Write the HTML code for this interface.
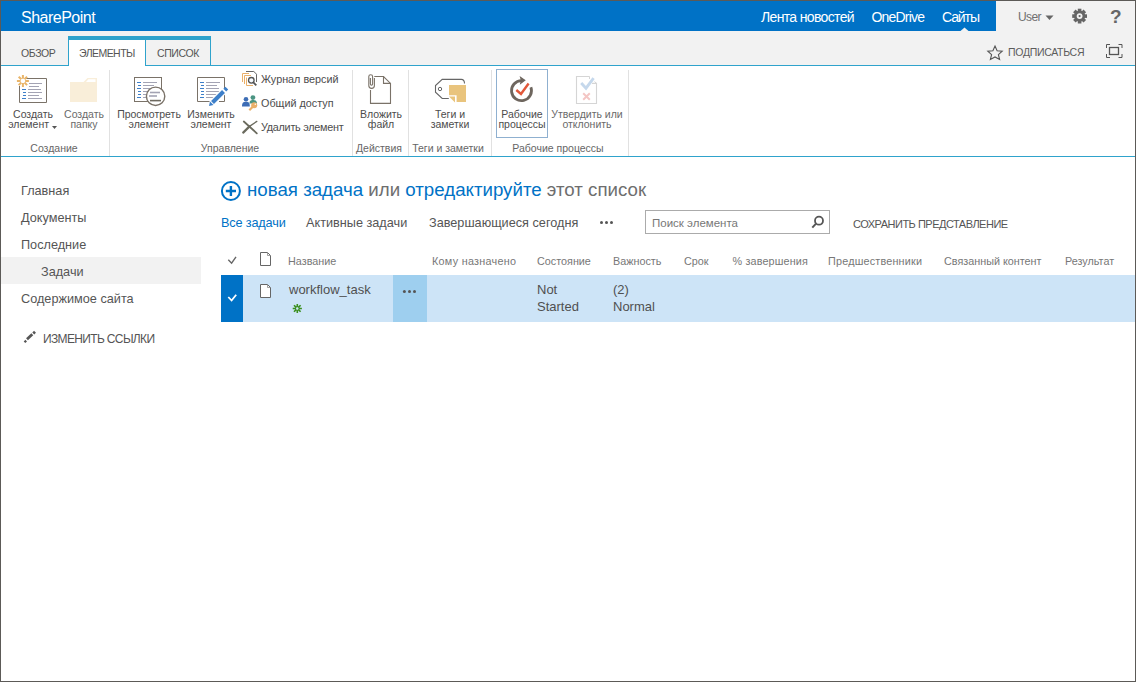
<!DOCTYPE html>
<html><head><meta charset="utf-8">
<style>
*{margin:0;padding:0;box-sizing:border-box}
html,body{width:1136px;height:682px;overflow:hidden;background:#fff}
body{font-family:"Liberation Sans",sans-serif;position:relative;color:#444}
.a{position:absolute;white-space:nowrap;line-height:1}
#frame{position:absolute;left:0;top:0;width:1136px;height:682px;border:1px solid #5c5a57;pointer-events:none;z-index:50}
.st{color:#fff;font-size:14px;top:9.5px;letter-spacing:-0.65px}
.tab{font-size:10.5px;color:#555;top:48px;letter-spacing:-0.4px}
.rb{font-size:10.5px;color:#4c4c4c;text-align:center;line-height:10px;top:109px;width:90px;white-space:nowrap}
.dis{color:#6a6a6a}
.gl{font-size:10.5px;color:#666;top:143px;width:120px;text-align:center}
.sep{position:absolute;top:70px;width:1px;height:86px;background:#e1e1e1}
.nav{font-size:12.7px;color:#555}
.sm{font-size:10.8px;color:#4c4c4c;left:261px}
.hd{font-size:10.8px;color:#777;top:256px}
.cell{font-size:13px;color:#505050;line-height:17px;top:281px}
svg{position:absolute;overflow:visible}
</style></head><body>
<!-- suite bar -->
<div class="a" style="left:0;top:0;width:1136px;height:31px;background:#f2f2f2"></div>
<div class="a" style="left:0;top:0;width:996px;height:31px;background:#0072c6"></div>
<div class="a st" style="left:21px;top:9.5px;font-size:16px;letter-spacing:-0.5px">SharePoint</div>
<div class="a st" style="left:761px">Лента новостей</div>
<div class="a st" style="left:871.5px;letter-spacing:-0.8px">OneDrive</div>
<div class="a st" style="left:942px;letter-spacing:-1.1px">Сайты</div>
<div class="a" style="left:1018px;top:11px;font-size:12px;color:#707070;letter-spacing:-0.6px">User</div>
<div class="a" style="left:1110px;top:7px;font-size:19px;font-weight:bold;color:#666">?</div>

<!-- ribbon tabs row -->
<div class="a" style="left:0;top:31px;width:1136px;height:35px;background:#f2f2f2"></div>
<div class="a" style="left:0;top:65px;width:1136px;height:1px;background:#2fa3cc"></div>
<div class="a" style="left:68px;top:36px;width:143px;height:4px;background:#2fa3cc"></div>
<div class="a" style="left:68px;top:40px;width:78px;height:26px;background:#fff;border-left:1px solid #2fa3cc;border-right:1px solid #2fa3cc"></div>
<div class="a" style="left:210px;top:40px;width:1px;height:25px;background:#2fa3cc"></div>
<div class="a tab" style="left:21px">ОБЗОР</div>
<div class="a tab" style="left:79px;letter-spacing:-0.55px">ЭЛЕМЕНТЫ</div>
<div class="a tab" style="left:157px">СПИСОК</div>
<div class="a" style="left:1008px;top:47px;font-size:10.5px;color:#5c5c5c;letter-spacing:-0.3px">ПОДПИСАТЬСЯ</div>

<!-- ribbon -->
<div class="a" style="left:0;top:156px;width:1136px;height:1px;background:#2fa3cc"></div>
<div class="sep" style="left:109px"></div>
<div class="sep" style="left:352px"></div>
<div class="sep" style="left:408px"></div>
<div class="sep" style="left:491px"></div>
<div class="sep" style="left:628px"></div>

<div class="a rb" style="left:-12px">Создать<br>элемент&nbsp;&nbsp;&nbsp;</div>
<div class="a rb dis" style="left:39px">Создать<br>папку</div>
<div class="a rb" style="left:104px">Просмотреть<br>элемент</div>
<div class="a rb" style="left:166px">Изменить<br>элемент</div>
<div class="a rb" style="left:336px">Вложить<br>файл</div>
<div class="a rb" style="left:405px">Теги и<br>заметки</div>
<div class="a" style="left:496px;top:69px;width:52px;height:69px;border:1px solid #8fb0d0;background:#fff"></div>
<div class="a rb" style="left:477px">Рабочие<br>процессы</div>
<div class="a rb dis" style="left:542px">Утвердить или<br>отклонить</div>

<div class="a sm" style="top:74px">Журнал версий</div>
<div class="a sm" style="top:98px">Общий доступ</div>
<div class="a sm" style="top:122px;letter-spacing:-0.25px">Удалить элемент</div>

<div class="a gl" style="left:-6px">Создание</div>
<div class="a gl" style="left:170px">Управление</div>
<div class="a gl" style="left:319px">Действия</div>
<div class="a gl" style="left:388px">Теги и заметки</div>
<div class="a gl" style="left:498px">Рабочие процессы</div>

<!-- left nav -->
<div class="a nav" style="left:21px;top:185px">Главная</div>
<div class="a nav" style="left:21px;top:212px">Документы</div>
<div class="a nav" style="left:21px;top:239px">Последние</div>
<div class="a" style="left:1px;top:257px;width:200px;height:27px;background:#f2f2f2"></div>
<div class="a nav" style="left:41px;top:266px">Задачи</div>
<div class="a nav" style="left:21px;top:293px">Содержимое сайта</div>
<div class="a" style="left:43px;top:333px;font-size:12px;color:#555;letter-spacing:-0.65px">ИЗМЕНИТЬ ССЫЛКИ</div>

<!-- main -->
<div class="a" style="left:247px;top:180.5px;font-size:18.7px;color:#0072c6"><span>новая задача</span> <span style="color:#6e6e6e">или</span> <span>отредактируйте</span> <span style="color:#6e6e6e">этот список</span></div>
<div class="a nav" style="left:221px;top:217px;color:#0072c6;letter-spacing:-0.15px">Все задачи</div>
<div class="a nav" style="left:306px;top:217px">Активные задачи</div>
<div class="a nav" style="left:429px;top:217px">Завершающиеся сегодня</div>
<div class="a" style="left:645px;top:210px;width:185px;height:24px;border:1px solid #ababab;background:#fff"></div>
<div class="a" style="left:652px;top:218px;font-size:11.5px;color:#777">Поиск элемента</div>
<div class="a" style="left:853px;top:219px;font-size:11px;color:#555;letter-spacing:-0.5px">СОХРАНИТЬ ПРЕДСТАВЛЕНИЕ</div>

<div class="a hd" style="left:288px">Название</div>
<div class="a hd" style="left:432px;letter-spacing:0.28px">Кому назначено</div>
<div class="a hd" style="left:537px">Состояние</div>
<div class="a hd" style="left:613px">Важность</div>
<div class="a hd" style="left:684px">Срок</div>
<div class="a hd" style="left:732.5px;letter-spacing:0.15px">% завершения</div>
<div class="a hd" style="left:828px;letter-spacing:0.2px">Предшественники</div>
<div class="a hd" style="left:944px">Связанный контент</div>
<div class="a hd" style="left:1065px">Результат</div>

<div class="a" style="left:221px;top:275px;width:915px;height:47px;background:#cde4f7"></div>
<div class="a" style="left:221px;top:275px;width:22px;height:47px;background:#0072c6"></div>
<div class="a" style="left:393px;top:275px;width:34px;height:47px;background:#9ecfef"></div>
<div class="a" style="left:289px;top:283px;font-size:13px;color:#505050">workflow_task</div>
<div class="a cell" style="left:537px">Not<br>Started</div>
<div class="a cell" style="left:613px">(2)<br>Normal</div>


<svg width="1136" height="682" viewBox="0 0 1136 682" style="left:0;top:0;z-index:10;pointer-events:none">
<!-- sites triangle -->
<polygon points="960.5,31 964.5,27.5 968.5,31" fill="#f2f2f2"/>
<!-- user dropdown -->
<polygon points="1045.5,15.5 1053.5,15.5 1049.5,20" fill="#666"/>
<!-- gear -->
<g transform="translate(1079.6,16.1)" fill="#666">
 <circle r="5.6"/>
 <rect x="-1.8" y="-7.4" width="3.6" height="3" transform="rotate(0)"/>
 <rect x="-1.8" y="-7.4" width="3.6" height="3" transform="rotate(45)"/>
 <rect x="-1.8" y="-7.4" width="3.6" height="3" transform="rotate(90)"/>
 <rect x="-1.8" y="-7.4" width="3.6" height="3" transform="rotate(135)"/>
 <rect x="-1.8" y="-7.4" width="3.6" height="3" transform="rotate(180)"/>
 <rect x="-1.8" y="-7.4" width="3.6" height="3" transform="rotate(225)"/>
 <rect x="-1.8" y="-7.4" width="3.6" height="3" transform="rotate(270)"/>
 <rect x="-1.8" y="-7.4" width="3.6" height="3" transform="rotate(315)"/>
 <circle r="2.9" fill="#f2f2f2"/><circle r="1.1" fill="#666"/>
</g>
<!-- star -->
<polygon points="995,46 997.1,50.7 1002.2,51.1 998.4,54.6 999.6,59.4 995,56.9 990.4,59.4 991.6,54.6 987.8,51.1 992.9,50.7" fill="none" stroke="#555" stroke-width="1.1" stroke-linejoin="miter"/>
<!-- focus icon -->
<g fill="none" stroke="#555" stroke-width="1">
 <path d="M1106.5,48 V44.5 H1110"/><path d="M1118.5,44.5 H1122 V48"/>
 <path d="M1106.5,54 V57.5 H1110"/><path d="M1118.5,57.5 H1122 V54"/>
 <rect x="1109.5" y="47.5" width="9" height="7" stroke-width="1.3"/>
</g>

<!-- create item icon -->
<g>
 <path d="M25,78.5 H46.5 V102.5 H19.5 V86" fill="none" stroke="#7a7268" stroke-width="1"/>
 <g stroke="#a3a3b3" stroke-width="1">
  <path d="M29,83.5 H42"/><path d="M29,86.5 H39"/><path d="M28,89.5 H41"/><path d="M28,92.5 H42"/><path d="M28,95.5 H39"/><path d="M28,98.5 H42"/>
 </g>
 <g stroke="#3d7fc9" stroke-width="1">
  <path d="M22,89.5 H26"/><path d="M23,92.5 H26"/><path d="M23,95.5 H26"/><path d="M22,98.5 H26"/>
 </g>
 <g stroke="#e9b56a" stroke-width="2" transform="translate(22.9,80.9)">
  <path d="M0,-6 V-2.2 M0,2.2 V6 M-6,0 H-2.2 M2.2,0 H6 M-4.2,-4.2 L-1.6,-1.6 M1.6,1.6 L4.2,4.2 M-4.2,4.2 L-1.6,1.6 M1.6,-1.6 L4.2,-4.2"/>
 </g>
</g>
<!-- folder icon -->
<path d="M70,82 H83.5 L87.5,78 H97 V102 H70 Z" fill="#f9eed9"/>
<path d="M86,82 L88.3,79.3 H95.5 V82 Z" fill="#fff"/>

<!-- view item icon -->
<g>
 <rect x="134.5" y="77.5" width="27" height="24" fill="none" stroke="#7a7268"/>
 <g stroke="#3d7fc9"><path d="M137,82.5 H141"/><path d="M138,85.5 H141"/><path d="M137,88.5 H141"/><path d="M138,91.5 H141"/><path d="M138,94.5 H141"/><path d="M137,97.5 H141"/></g>
 <g stroke="#a3a3b3"><path d="M143,82.5 H157"/><path d="M143,85.5 H154"/><path d="M143,88.5 H156"/><path d="M143,91.5 H157"/><path d="M143,94.5 H156"/><path d="M143,97.5 H156"/></g>
 <circle cx="155.6" cy="96.3" r="9.2" fill="#fff" stroke="#7a7268" stroke-width="1.4"/>
 <path d="M150,92.5 H160" stroke="#a3a3b3" stroke-width="1.6"/>
 <path d="M149,96 H157" stroke="#a3a3b3" stroke-width="1.6"/>
 <path d="M150,100.6 H161" stroke="#6e6a60" stroke-width="1.6"/>
</g>
<!-- edit item icon -->
<g>
 <path d="M216,101.5 H197.5 V77.5 H224.5 V88" fill="none" stroke="#7a7268"/>
 <path d="M224.5,94 V101.5 H219" fill="none" stroke="#7a7268"/>
 <g stroke="#3d7fc9"><path d="M200,82.5 H204"/><path d="M201,85.5 H204"/><path d="M200,88.5 H204"/><path d="M201,91.5 H204"/><path d="M201,94.5 H204"/><path d="M200,97.5 H204"/></g>
 <g stroke="#a3a3b3"><path d="M206,82.5 H220"/><path d="M206,85.5 H217"/><path d="M206,88.5 H219"/><path d="M206,91.5 H220"/><path d="M206,94.5 H217"/><path d="M206,97.5 H214"/></g>
 <path d="M211.5,103.5 L224.5,90.5" stroke="#fff" stroke-width="6.5"/>
 <path d="M212.5,102.5 L223.5,91.5" stroke="#3d7fc9" stroke-width="4"/>
 <path d="M224.8,90.2 L226.8,88.2" stroke="#3d7fc9" stroke-width="4"/>
 <polygon points="209,106 210,101.5 213.5,105" fill="#3d7fc9"/>
</g>

<!-- version history small icon -->
<g fill="none" stroke-width="1">
 <path d="M242.5,82 V73.5 H249" stroke="#eab06a"/>
 <path d="M244.5,84 V75.5 H251" stroke="#eab06a"/>
 <path d="M246.5,77.5 V85.5 H253" stroke="#eab06a"/>
 <path d="M246,71.5 H253.8 L256.5,74.2 V82" stroke="#666"/>
 <circle cx="251.3" cy="80.3" r="2.8" stroke="#555" stroke-width="1.3" fill="#f4f8fc"/>
 <path d="M253.3,82.4 L256.3,85.4" stroke="#555" stroke-width="1.8"/>
</g>
<!-- share icon -->
<g>
 <circle cx="252.9" cy="97.6" r="2.4" fill="#4a9482"/>
 <path d="M249.5,103.6 C249.5,100.5 251,100 252.9,100 C255,100 257,100.5 257,103.6 Z" fill="#4a9482"/>
 <circle cx="246" cy="99.3" r="2.3" fill="#3d6db5"/>
 <path d="M242,106.6 C242,102.5 243.5,101.8 246,101.8 C248.5,101.8 249.8,102.5 249.8,106.6 Z" fill="#3d6db5"/>
 <circle cx="254.2" cy="105.2" r="3" fill="#eab06a"/>
 <path d="M253,106.5 L249.3,110.3" stroke="#eab06a" stroke-width="2.2"/>
 <circle cx="255.3" cy="104.3" r="0.7" fill="#fff"/>
</g>
<!-- delete icon -->
<g stroke="#6b6b5e" stroke-linecap="round">
 <path d="M243.8,121.5 L256.8,133.3" stroke-width="1.8"/>
 <path d="M243.2,132.6 L249.5,126.4" stroke-width="2.2"/>
 <path d="M249.5,126.4 L256.8,121.4" stroke-width="1.3"/>
</g>

<!-- attach file icon -->
<g fill="none" stroke="#7a7268" stroke-width="1.1">
 <path d="M374.3,76.5 H383.5 L390.5,83.4 V103.4 H370.5 V90"/>
 <path d="M383.5,76.5 V83.4 H390.5"/>
 <path d="M374.4,78 V85.6 A2.8,2.8 0 0 1 368.8,85.6 V76.6 A1.9,1.9 0 0 1 372.6,76.6 V84 A1.1,1.1 0 0 1 370.4,84 V78"/>
</g>
<!-- tags icon -->
<g>
 <path d="M448.8,98.5 H442.2 L435.5,92.2 V85.6 L442.2,79.4 H461.3 C463.4,79.4 464.5,81 464.5,83.6" fill="none" stroke="#666" stroke-width="1.1"/>
 <circle cx="440" cy="89" r="1.7" fill="none" stroke="#666" stroke-width="1"/>
 <path d="M449,85 H466 V102 H456.6 V95.2 H449 Z" fill="#e9c47d"/>
 <path d="M449,96.6 H455 V102.4 Z" fill="#e9c47d"/>
</g>
<!-- workflows icon -->
<g fill="none">
 <path d="M521.5,80.6 A10,10 0 1 0 530.9,87.2" stroke="#6e665e" stroke-width="2.8"/>
 <polygon points="519.6,76 525.8,80.3 519.8,84.8 520.8,80.3" fill="#6e665e"/>
 <path d="M516.3,90 L521,94 L528.6,83.5" stroke="#e2583a" stroke-width="2.4"/>
</g>
<!-- approve/reject icon -->
<g fill="none">
 <path d="M589.5,76.5 H576.5 V103.5 H596.5 V83.4 H592" stroke="#d5d5d5" stroke-width="1.1"/>
 <path d="M589.5,76.5 V79 M594.5,81.5 L596.5,83.4" stroke="#d5d5d5" stroke-width="1"/>
 <path d="M581.2,83 L586,88.2 L593.6,78.2" stroke="#c5d8ec" stroke-width="2.8"/>
 <path d="M583.2,93.3 L589.8,99.8 M589.8,93.3 L583.2,99.8" stroke="#f4c6c4" stroke-width="2"/>
</g>
<!-- create item dropdown arrow -->
<polygon points="52,126 57,126 54.5,129" fill="#555"/>

<!-- pencil (edit links) -->
<g stroke="#555" stroke-width="2.8">
 <path d="M24.5,342.3 L26.2,340.6" stroke-width="2.2"/>
 <path d="M27,339.3 L32.3,334.3"/>
 <path d="M33.3,333.4 L35,331.8"/>
</g>
<!-- add circle -->
<circle cx="230.9" cy="191" r="9" fill="none" stroke="#0072c6" stroke-width="2"/>
<path d="M225.8,191 H236 M230.9,185.9 V196.1" stroke="#0072c6" stroke-width="2.4"/>
<!-- view bar dots -->
<g fill="#555"><circle cx="601.5" cy="222.4" r="1.5"/><circle cx="606.5" cy="222.4" r="1.5"/><circle cx="611.5" cy="222.4" r="1.5"/></g>
<!-- search icon -->
<circle cx="819" cy="220.7" r="4" fill="none" stroke="#555" stroke-width="1.8"/>
<path d="M815.8,223.9 L812.3,227.6" stroke="#555" stroke-width="2"/>
<!-- header check -->
<path d="M228.3,259.8 L231.6,263.2 L236,256.8" fill="none" stroke="#666" stroke-width="1.4"/>
<!-- header doc -->
<path d="M260.5,252.5 H267.5 L270.5,255.5 V265.5 H260.5 Z" fill="#fff" stroke="#666"/><path d="M267.5,253 V255.5 H270" fill="none" stroke="#888" stroke-width="0.8"/>
<!-- row check -->
<path d="M228.3,297 L231.6,300.5 L236.2,294.8" fill="none" stroke="#fff" stroke-width="1.8"/>
<!-- row doc -->
<path d="M260.5,284.5 H267.5 L270.5,287.5 V297.5 H260.5 Z" fill="#fff" stroke="#666"/><path d="M267.5,285 V287.5 H270" fill="none" stroke="#888" stroke-width="0.8"/>
<!-- green asterisk -->
<g stroke="#3a8f1e" stroke-width="1.6" transform="translate(297.3,308.5)">
 <path d="M0,-4.6 V-1.2 M0,1.2 V4.6 M-4.6,0 H-1.2 M1.2,0 H4.6 M-3.3,-3.3 L-0.9,-0.9 M0.9,0.9 L3.3,3.3 M-3.3,3.3 L-0.9,0.9 M0.9,-0.9 L3.3,-3.3"/>
</g>
<!-- row dots -->
<g fill="#555"><circle cx="404.4" cy="291.4" r="1.5"/><circle cx="409.5" cy="291.4" r="1.5"/><circle cx="414.5" cy="291.4" r="1.5"/></g>
</svg>

<div id="frame"></div>
</body></html>
